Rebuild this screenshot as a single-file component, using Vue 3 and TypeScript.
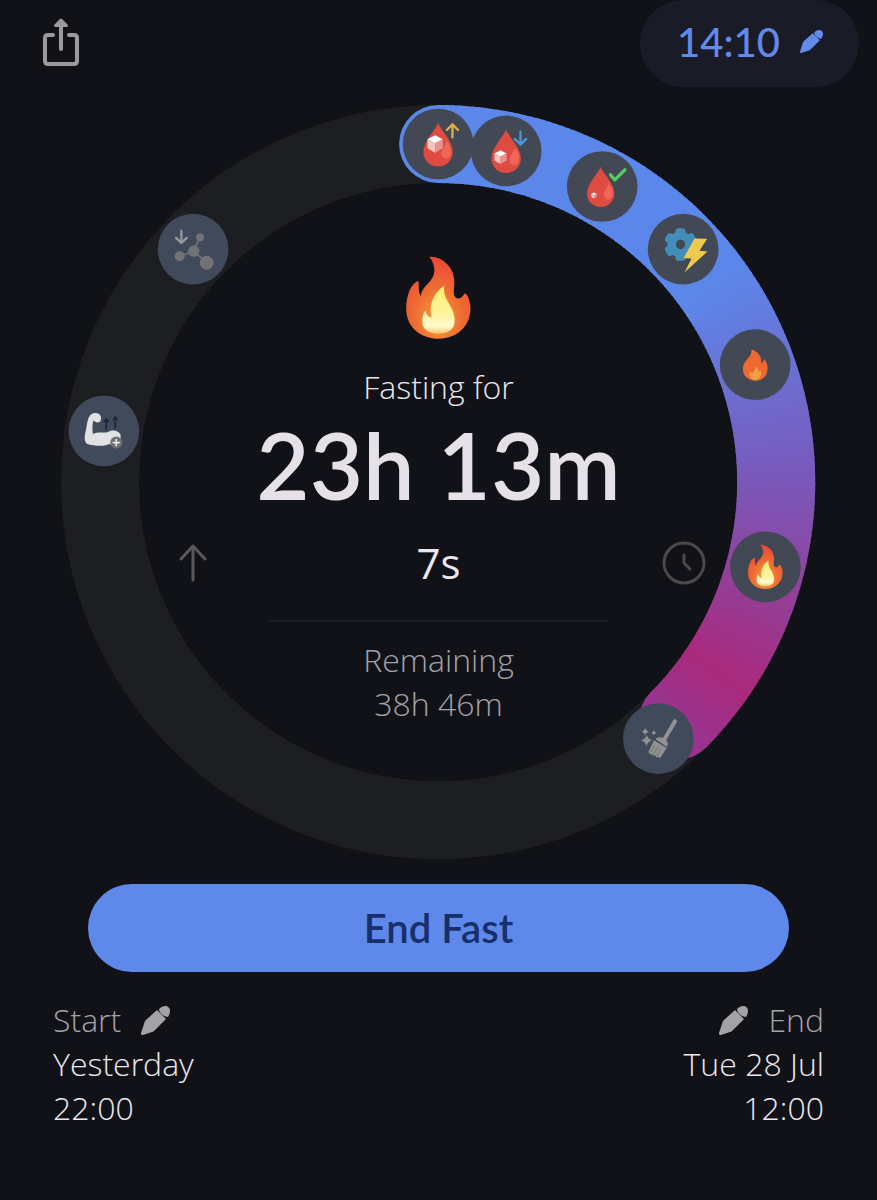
<script setup lang="ts">
interface Stop {
  angle: number
  rgb: [number, number, number]
}

interface Milestone {
  icon: string
  hour: number
}

const CENTER = 377
const RADIUS = 338
const TOTAL_HOURS = 62
const ELAPSED_HOURS = 23.22
const progressAngle = (ELAPSED_HOURS / TOTAL_HOURS) * 360

const stops: Stop[] = [
  { angle: 0, rgb: [92, 135, 234] },
  { angle: 54, rgb: [92, 135, 234] },
  { angle: 90, rgb: [122, 88, 186] },
  { angle: 124, rgb: [169, 42, 124] },
  { angle: 138, rgb: [148, 54, 148] },
]

const milestones: Milestone[] = [
  { icon: 'sugar-up', hour: 0 },
  { icon: 'sugar-down', hour: 2 },
  { icon: 'sugar-ok', hour: 5 },
  { icon: 'metabolism', hour: 8 },
  { icon: 'burn', hour: 12 },
  { icon: 'ketosis', hour: 18 },
  { icon: 'autophagy', hour: 24 },
  { icon: 'growth', hour: 48 },
  { icon: 'insulin', hour: 54 },
]

function pointAt(angle: number): { x: number; y: number } {
  const rad = (angle * Math.PI) / 180
  return { x: CENTER + RADIUS * Math.sin(rad), y: CENTER - RADIUS * Math.cos(rad) }
}

function colorAt(angle: number): string {
  const next = Math.max(1, stops.findIndex((s) => s.angle >= angle))
  const a = stops[next - 1]
  const b = stops[next]
  const t = (angle - a.angle) / (b.angle - a.angle)
  return `rgb(${a.rgb.map((v, i) => Math.round(v + (b.rgb[i] - v) * t)).join(',')})`
}

function arc(from: number, to: number): string {
  const a = pointAt(from)
  const b = pointAt(to)
  return `M${a.x.toFixed(2)} ${a.y.toFixed(2)}A${RADIUS} ${RADIUS} 0 0 1 ${b.x.toFixed(2)} ${b.y.toFixed(2)}`
}

const segments = Array.from({ length: Math.ceil(progressAngle) }, (_, i) => ({
  d: arc(i, Math.min(i + 1.5, progressAngle)),
  color: colorAt(i + 0.5),
}))

const caps = [0, progressAngle].map((angle) => ({ ...pointAt(angle), color: colorAt(angle) }))
const badges = milestones.map((m) => {
  const p = pointAt((m.hour / TOTAL_HOURS) * 360)
  return {
    icon: m.icon,
    fill: m.hour > ELAPSED_HOURS ? '#414a5b' : '#424854',
    transform: `translate(${p.x.toFixed(2)} ${p.y.toFixed(2)}) scale(0.3333)`,
  }
})
</script>

<template>
  <main class="screen">
    <svg class="defs" aria-hidden="true">
      <defs>
        <radialGradient id="flame-outer" cx="0.5" cy="0.75" r="0.75">
          <stop offset="0" stop-color="#f6a03c" />
          <stop offset="0.5" stop-color="#ee6c33" />
          <stop offset="1" stop-color="#ee4536" />
        </radialGradient>
        <linearGradient id="flame-inner" x1="0" y1="0" x2="0" y2="1">
          <stop offset="0" stop-color="#fff06c" />
          <stop offset="0.6" stop-color="#fff3a0" />
          <stop offset="0.85" stop-color="#fffad0" />
          <stop offset="1" stop-color="#fbc860" />
        </linearGradient>
        <symbol id="flame" viewBox="80 47 193 248">
          <path fill="url(#flame-outer)" d="M149 49C190 47 226 84 224 128C223 150 219 162 228 171C238 179 248 170 255 158C265 162 272 186 272 204C272 256 232 294 178 294C122 294 80 258 80 205C80 164 94 130 116 121C120 136 114 152 124 167C126 135 160 128 164 94C165 76 158 60 149 49Z" />
          <path fill="url(#flame-inner)" d="M194 135C186 178 225 195 225 240C225 266 206 279 177 279C147 279 128 267 128 242C128 228 131 216 138 210C140 222 146 230 156 231C146 190 164 155 194 135Z" />
        </symbol>
        <symbol id="pencil" viewBox="0 0 29 29">
          <path fill="currentColor" d="M1 29C0 29 0 28 0 27L3 18C3 17 4 15 5 14L16 4L25 13L14 24C13 25 12 26 11 26L2 29Z" />
          <path fill="currentColor" d="M18 3C20 1 22 0 24 0C27 0 29 2 29 5C29 7 28 9 27 11C23 11 18 7 18 3Z" />
        </symbol>
        <symbol id="drop" viewBox="-50 -70 100 140" overflow="visible">
          <path fill="#df4a41" d="M0 -64C8 -42 44 -10 44 22C44 49 24 66 0 66C-24 66 -44 49 -44 22C-44 -10 -8 -42 0 -64Z" />
          <path fill="#ef6556" d="M26 -10C39 4 42 22 36 35C30 46 14 46 10 30C8 16 20 8 26 -10Z" />
        </symbol>
        <symbol id="cube" viewBox="-24 -27 48 54" overflow="visible">
          <path fill="#fff" d="M0 -26L23 -14L0 -2L-23 -14Z" />
          <path fill="#f3c3be" d="M-23 -14L0 -2V26L-23 13Z" />
          <path fill="#e6938d" d="M23 -14L0 -2V26L23 13Z" />
        </symbol>
      </defs>
    </svg>

    <header class="topbar">
      <button class="icon-button share" type="button" aria-label="Share">
        <svg viewBox="0 0 36 48" width="36" height="48">
          <path d="M10 17H5Q2 17 2 20V43Q2 46 5 46H31Q34 46 34 43V20Q34 17 31 17H26M18 6V31" fill="none" stroke="#9b9a9f" stroke-width="4" stroke-linecap="round" />
          <path d="M17 1Q18 0 19 1L25 7Q25 9 24 9H12Q11 9 11 7Z" fill="#9b9a9f" />
        </svg>
      </button>
      <button class="goal" type="button" aria-label="Edit goal 14:10">
        <span>14:10</span>
        <svg width="23" height="23"><use href="#pencil" /></svg>
      </button>
    </header>

    <section class="dial">
      <svg class="ring" viewBox="0 0 754 754" aria-hidden="true">
        <circle :cx="CENTER" :cy="CENTER" :r="RADIUS" fill="none" stroke="#1d1e21" stroke-width="78" />
        <circle v-for="(cap, i) in caps" :key="'cap' + i" :cx="cap.x" :cy="cap.y" r="39" :fill="cap.color" />
        <path v-for="(segment, i) in segments" :key="i" :d="segment.d" :stroke="segment.color" fill="none" stroke-width="78" />
        <g v-for="badge in badges" :key="badge.icon" :transform="badge.transform">
          <circle r="106" :fill="badge.fill" />
          <g v-if="badge.icon === 'sugar-up'">
            <use href="#drop" x="-50" y="-69" width="100" height="140" />
            <use href="#cube" x="-33" y="-27" width="48" height="54" />
            <path d="M43 -20V-58M26 -42L43 -59L60 -42" class="line" stroke="#dfae45" />
          </g>
          <g v-else-if="badge.icon === 'sugar-down'">
            <use href="#drop" x="-50" y="-70" width="100" height="140" />
            <use href="#cube" x="-36" y="-3" width="38" height="43" />
            <path d="M43 -58V-20M26 -36L43 -19L60 -36" class="line" stroke="#4797dc" />
          </g>
          <g v-else-if="badge.icon === 'sugar-ok'">
            <use href="#drop" x="-51" y="-65" width="93" height="130" />
            <use href="#cube" x="-33" y="17" width="17" height="20" />
            <path d="M25 -35L38 -20L68 -50" class="line bold" stroke="#58c964" />
          </g>
          <g v-else-if="badge.icon === 'metabolism'">
            <g transform="translate(-8 -14)" fill="#438eb8">
              <circle r="39" />
              <rect v-for="n in 6" :key="n" x="-15" y="-49" width="30" height="28" rx="9" :transform="`rotate(${n * 60})`" />
              <circle r="14" :fill="badge.fill" />
            </g>
            <path d="M34 -32L72 -31L49 5L73 7L4 70L25 28L1 27Z" fill="#eec950" />
          </g>
          <g v-else-if="badge.icon === 'burn'">
            <path d="M-11 -46C8 -39 21 -24 18 -4C24 -6 26 -11 26 -17C35 -9 38 1 37 14C36 36 21 48 1 48C-21 48 -37 34 -37 13C-37 -15 -8 -20 -11 -46Z" fill="#ee692f" />
            <path d="M0 4C8 9 9 14 10 22C13 21 14 18 15 15C24 31 12 46 0 46C-14 46 -21 33 -15 20C-12 22 -11 25 -9 27C-5 20 3 15 0 4Z" fill="#f0a044" />
          </g>
          <use v-else-if="badge.icon === 'ketosis'" href="#flame" x="-53" y="-67" width="106" height="134" />
          <g v-else-if="badge.icon === 'autophagy'" fill="#919191">
            <path d="M50 -52L17 4" class="line handle" stroke="#919191" />
            <path d="M-8 2C-4 -5 9 -6 19 0C28 5 31 17 26 25Z" />
            <path d="M-13 5L25 28L5 59L-1 54L-5 57L-10 50L-14 52L-19 46L-23 48L-30 40Z" />
            <path d="M-12 22L-22 40M-3 27L-13 46M6 32L-3 51" class="line hair" stroke="#666a71" />
            <path d="M-35 -12Q-32 1 -18 5Q-31 9 -36 22Q-39 10 -52 5Q-38 1 -35 -12ZM-40 -31Q-36 -24 -29 -21Q-37 -18 -40 -11Q-42 -19 -49 -21Q-42 -24 -40 -31ZM-13 -26Q-11 -20 -6 -18Q-12 -15 -14 -10Q-16 -16 -21 -18Q-15 -20 -13 -26Z" />
          </g>
          <g v-else-if="badge.icon === 'growth'">
            <path d="M-38 -50C-27 -56 -14 -54 -10 -45C-7 -40 -9 -33 -12 -27L-22 -25L-32 -31C-35 -17 -35 -4 -33 9C-15 1 1 8 13 3C26 -5 46 -1 50 13C53 34 34 42 13 40C-3 48 -33 44 -50 39C-62 31 -57 13 -53 -7C-50 -24 -48 -43 -38 -50Z" fill="#e1e2e4" />
            <path d="M7 -4V-35M1 -28L7 -36L13 -28M34 -9V-41M28 -34L34 -42L40 -34" class="line thin" stroke="#20253b" />
            <circle cx="37" cy="35" r="18" fill="#707172" />
            <path d="M37 26V44M28 35H46" class="line thin" stroke="#e8e8e8" />
          </g>
          <g v-else fill="#717275">
            <path d="M-40 21L2 6L21 -36M2 6L41 41" class="line thin" stroke="#717275" />
            <circle cx="2" cy="6" r="17" />
            <circle cx="21" cy="-36" r="12" />
            <circle cx="-40" cy="21" r="15" />
            <circle cx="41" cy="41" r="21" />
            <path d="M-35 -55V-20M-51 -34L-35 -19L-19 -34" class="line" stroke="#99999c" />
          </g>
        </g>
      </svg>

      <div class="readout">
        <svg class="hero-flame" width="65" height="83" aria-hidden="true"><use href="#flame" /></svg>
        <p class="label">Fasting for</p>
        <h1 class="elapsed">23h 13m</h1>
        <div class="seconds-row">
          <button class="icon-button" type="button" aria-label="Count up">
            <svg viewBox="0 0 28 38" width="28" height="38">
              <path d="M14 36V2M2 15L14 2L26 15" fill="none" stroke="#59595d" stroke-width="3" stroke-linecap="round" stroke-linejoin="round" />
            </svg>
          </button>
          <span class="seconds">7s</span>
          <button class="icon-button" type="button" aria-label="History">
            <svg viewBox="0 0 44 44" width="44" height="44">
              <circle cx="22" cy="22" r="20" fill="none" stroke="#4a4a4e" stroke-width="3" />
              <path d="M22 14V22L28 28" fill="none" stroke="#4a4a4e" stroke-width="3" stroke-linecap="round" stroke-linejoin="round" />
            </svg>
          </button>
        </div>
        <hr class="divider" />
        <p class="label muted">Remaining</p>
        <p class="label muted">38h 46m</p>
      </div>
    </section>

    <button class="end-fast" type="button">End Fast</button>

    <footer class="times">
      <div class="time">
        <button class="edit" type="button">
          <span>Start</span>
          <svg width="29" height="29" aria-hidden="true"><use href="#pencil" /></svg>
        </button>
        <span>Yesterday</span>
        <span>22:00</span>
      </div>
      <div class="time end">
        <button class="edit" type="button">
          <svg width="29" height="29" aria-hidden="true"><use href="#pencil" /></svg>
          <span>End</span>
        </button>
        <span>Tue 28 Jul</span>
        <span>12:00</span>
      </div>
    </footer>
  </main>
</template>

<style>
body {
  margin: 0;
  background: #111217;
}
</style>

<style scoped>
.screen {
  min-height: 100vh;
  box-sizing: border-box;
  background: #111217;
  color: #ece7ee;
  font-family: "Open Sans", Lato, sans-serif;
  font-size: 32px;
  font-weight: 300;
  line-height: 44px;
  font-variant-ligatures: none;
}

.defs {
  position: absolute;
  width: 0;
  height: 0;
}

button {
  border: 0;
  padding: 0;
  margin: 0;
  background: none;
  color: inherit;
  font: inherit;
  cursor: pointer;
}

.topbar {
  display: flex;
  justify-content: space-between;
  align-items: flex-start;
  height: 105px;
  padding: 0 18px 0 43px;
}

.icon-button {
  display: flex;
}

.share {
  padding-top: 18px;
}

.goal {
  display: flex;
  align-items: center;
  gap: 20px;
  height: 87px;
  padding: 0 36px 4px 37px;
  border-radius: 44px;
  box-sizing: border-box;
  background: #191c27;
  color: #6389ea;
  font-family: Lato, "Open Sans", sans-serif;
  font-size: 40px;
  font-weight: 500;
}

.dial {
  display: grid;
  width: 86%;
  margin: 0 auto;
}

.ring,
.readout {
  grid-area: 1 / 1;
}

.ring {
  display: block;
  width: 100%;
}

.line {
  fill: none;
  stroke-width: 7;
  stroke-linecap: round;
  stroke-linejoin: round;
}

.line.bold {
  stroke-width: 10;
}

.line.thin {
  stroke-width: 5;
}

.line.hair {
  stroke-width: 2;
}

.line.handle {
  stroke-width: 12;
}

.readout {
  display: flex;
  flex-direction: column;
  align-items: center;
  padding-top: 151px;
}

.hero-flame {
  margin-bottom: 26px;
}

.label {
  margin: 0;
}

.muted {
  color: #a3a2a7;
}

.elapsed {
  margin: 0;
  color: #e6e1e8;
  font-family: Lato, "Open Sans", sans-serif;
  font-size: 92px;
  font-weight: 600;
  line-height: 112px;
}

.seconds-row {
  display: grid;
  grid-template-columns: 44px 1fr 44px;
  align-items: center;
  justify-items: center;
  width: 71%;
  margin: 20px 0 35px;
}

.seconds {
  font-size: 42px;
  font-weight: 400;
}

.divider {
  width: 45%;
  height: 2px;
  margin: 0 0 16px;
  border: 0;
  background: #1e1f24;
}

.end-fast {
  display: block;
  width: 80%;
  height: 88px;
  margin: 25px auto 26px;
  border-radius: 44px;
  background: #5e88ea;
  color: #172f6b;
  font-family: Lato, "Open Sans", sans-serif;
  font-size: 40px;
  font-weight: 600;
}

.times {
  display: flex;
  justify-content: space-between;
  padding: 0 53px;
}

.time {
  display: flex;
  flex-direction: column;
  align-items: flex-start;
}

.time.end {
  align-items: flex-end;
}

.edit {
  display: flex;
  align-items: center;
  gap: 20px;
  color: #a3a2a7;
}
</style>
